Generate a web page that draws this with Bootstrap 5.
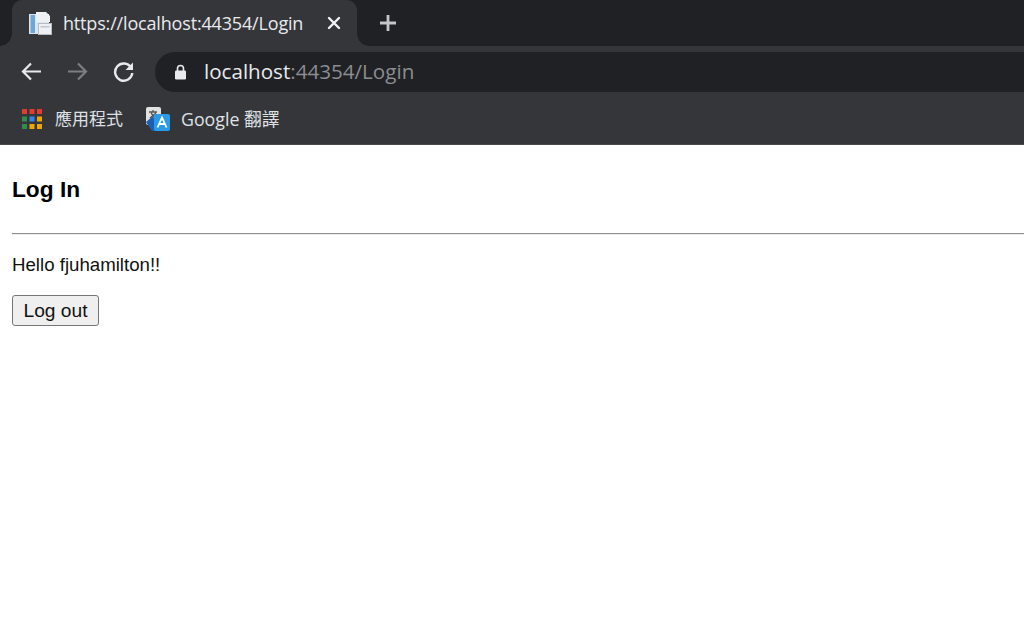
<!DOCTYPE html>
<html lang="zh-Hant">
<head>
<meta charset="utf-8">
<title>Login</title>
<link href="https://cdn.jsdelivr.net/npm/bootstrap@5.3.0/dist/css/bootstrap.min.css" rel="stylesheet">
<style>
html,body{height:100%;overflow:hidden}
body{background:#fff;color:#111;font-family:"Liberation Sans",Arial,sans-serif}
.chrome-ui{font-family:"Open Sans","Noto Sans CJK TC",sans-serif;color:#e8eaed}
.tab-strip{height:46px;background:#202124;padding-left:12px}
.tab-live{width:345px;height:46px;background:#35363a;border-radius:10px 10px 0 0;padding:0 16px 0 16px;font-size:18px;position:relative}
.tab-live::before,.tab-live::after{content:"";position:absolute;bottom:0;width:12px;height:12px;background:radial-gradient(circle at var(--cx) 0,#202124 11.5px,#35363a 12px)}
.tab-live::before{left:-12px;--cx:0}
.tab-live::after{right:-12px;--cx:100%}
.tab-live .tab-title{margin-left:11px;letter-spacing:-.17px;color:#e8eaed}
.tab-close{margin-left:auto}
.tab-plus{margin-left:22px}
.tool-bar{height:51px;background:#35363a;padding-left:20px}
.nav-ico{width:23px;height:23px;flex:none}
.nav-gap{margin-left:23px}
.url-box{flex:1;height:40px;background:#202124;border-radius:20px 0 0 20px;margin-left:20px;padding-left:19px;font-size:20.6px}
.url-host{margin-left:17px;color:#e8eaed}
.url-rest{color:#8b8d90}
.book-bar{height:48px;background:#35363a;padding:0 0 3px 22px;font-size:17.8px;color:#dfe1e5;border-bottom:1px solid #4a4b4e}
.book-bar .bk-one{margin-left:13px;font-size:17px}
.book-bar .bk-two{margin-left:23px}
.book-bar .bk-twotext{margin-left:11px}
.page-wrap{padding:0 0 0 12px}
.page-wrap h1{font-size:22.7px;font-weight:700;color:#000;margin:32px 0 32px;line-height:24px}
.page-rule{border:0;border-top:1px solid #8f8f8f;border-bottom:1px solid #eee;opacity:1;margin:0 0 19px;height:2px}
.page-hello{font-size:18.67px;line-height:22px;margin:0 0 19px}
.logout-btn{font-size:19.2px;line-height:20px;height:31px;width:87px;padding:0;background:#efefef;border:1px solid #767676;border-radius:3px;color:#111;display:block}
</style>
</head>
<body>
<div class="chrome-ui">
  <div class="tab-strip d-flex align-items-center">
    <div class="tab-live d-flex align-items-center">
      <svg width="24" height="24" viewBox="0 0 24 24" class="flex-shrink-0">
        <rect x="1" y="3" width="20" height="20" fill="#dfe5ec"/>
        <rect x="2.500" y="4" width="4.500" height="18" fill="#6aa8da"/>
        <path d="M8 1h10l4 4v6H8z" fill="#eef1f4"/>
        <rect x="10.500" y="12.500" width="13" height="11" fill="#eef1f4" stroke="#b4bbc3"/>
        <rect x="12.500" y="15" width="9" height="1.500" fill="#c0c6cd"/>
      </svg>
      <span class="tab-title">https://localhost:44354/Login</span>
      <svg class="tab-close" width="14" height="14" viewBox="0 0 14 14"><path d="M2 2l10 10M12 2L2 12" stroke="#f1f3f4" stroke-width="2.4" stroke-linecap="round"/></svg>
    </div>
    <svg class="tab-plus" width="18" height="18" viewBox="0 0 18 18"><path d="M9 1v16M1 9h16" stroke="#c4c7c9" stroke-width="2.800"/></svg>
  </div>
  <div class="tool-bar d-flex align-items-center">
    <svg class="nav-ico" viewBox="0 0 23 23"><path d="M21 11.500H3.500M11 3.500l-8 8 8 8" fill="none" stroke="#e8eaed" stroke-width="2.200"/></svg>
    <svg class="nav-ico nav-gap" viewBox="0 0 23 23"><path d="M2 11.500h17.500M12 3.500l8 8-8 8" fill="none" stroke="#7c7e81" stroke-width="2.200"/></svg>
    <svg class="nav-ico nav-gap" viewBox="0 0 23 23"><path d="M19 7.500A8.600 8.600 0 1 0 20.300 13" fill="none" stroke="#e8eaed" stroke-width="2.400"/><path d="M21 2.500v7.500h-7.500z" fill="#e8eaed"/></svg>
    <div class="url-box d-flex align-items-center">
      <svg width="13" height="16" viewBox="0 0 13 16" class="flex-shrink-0"><path d="M3.500 7V4.500a3 3 0 0 1 6 0V7" fill="none" stroke="#e8eaed" stroke-width="1.600"/><rect x="1" y="6.500" width="11" height="9" rx="1.200" fill="#e8eaed"/></svg>
      <span class="url-host">localhost<span class="url-rest">:44354/Login</span></span>
    </div>
  </div>
  <div class="book-bar d-flex align-items-center">
    <svg width="20" height="20" viewBox="0 0 20 20" class="flex-shrink-0">
      <rect x="0" y="0" width="5" height="5" fill="#e33b30"/><rect x="7.500" y="0" width="5" height="5" fill="#e33b30"/><rect x="15" y="0" width="5" height="5" fill="#e33b30"/>
      <rect x="0" y="7.500" width="5" height="5" fill="#2f8f4a"/><rect x="7.500" y="7.500" width="5" height="5" fill="#2f86ee"/><rect x="15" y="7.500" width="5" height="5" fill="#f2a600"/>
      <rect x="0" y="15" width="5" height="5" fill="#2f8f4a"/><rect x="7.500" y="15" width="5" height="5" fill="#f2a600"/><rect x="15" y="15" width="5" height="5" fill="#f2a600"/>
    </svg>
    <span class="bk-one">應用程式</span>
    <svg class="bk-two flex-shrink-0" width="24" height="24" viewBox="0 0 24 24">
      <rect x="0" y="0" width="15" height="18" rx="2" fill="#e2e2e2"/>
      <path d="M3 5h8M7 3v2M4 11l6-5M5 6l5 6" stroke="#555" stroke-width="1.300" fill="none"/>
      <path d="M0 15l7-6 6 15H6z" fill="#1a5fb4"/>
      <rect x="8" y="7" width="16" height="17" rx="2" fill="#2b9be8"/>
      <path d="M11.500 20.500L16 10.500l4.500 10M13.200 17h5.600" fill="none" stroke="#fff" stroke-width="1.800"/>
    </svg>
    <span class="bk-twotext">Google 翻譯</span>
  </div>
</div>
<main class="page-wrap">
  <h1>Log In</h1>
  <hr class="page-rule">
  <p class="page-hello">Hello fjuhamilton!!</p>
  <button type="button" class="logout-btn">Log out</button>
</main>
<script src="https://cdn.jsdelivr.net/npm/bootstrap@5.3.0/dist/js/bootstrap.bundle.min.js"></script>
</body>
</html>
